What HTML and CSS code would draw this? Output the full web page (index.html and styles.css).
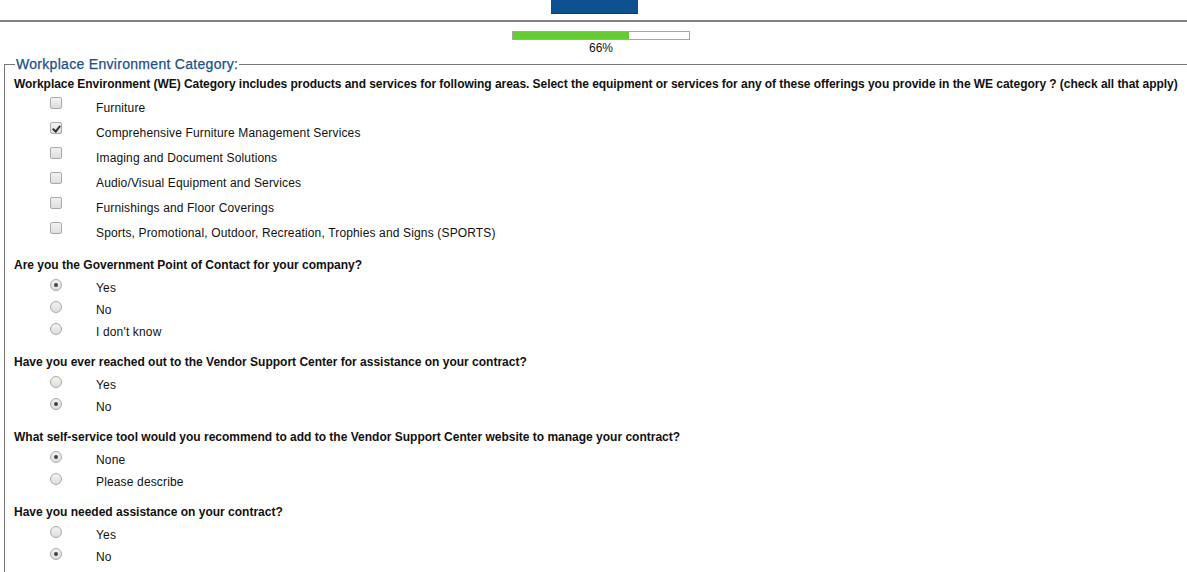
FILE: index.html
```html
<!DOCTYPE html>
<html lang="en">
  <head>
    <meta charset="utf-8">
    <title>Vendor Survey</title>
    <link rel="stylesheet" href="styles.css">
  </head>
  <body>
<div class="header">
  <div class="logo"></div>
</div>
<hr class="rule" />
<div class="progress">
  <div class="bar"><div class="fill" style="width: 66%;"></div></div>
  <div class="percent">66%</div>
</div>
<fieldset class="section">
  <legend>Workplace Environment Category:</legend>

  <div class="question long">Workplace Environment (WE) Category includes products and services for following areas. Select the equipment or services for any of these offerings you provide in the WE category ? (check all that apply)</div>
  <div class="options checks">
    <label class="option"><input type="checkbox"><span>Furniture</span></label>
    <label class="option"><input type="checkbox" checked><span>Comprehensive Furniture Management Services</span></label>
    <label class="option"><input type="checkbox"><span>Imaging and Document Solutions</span></label>
    <label class="option"><input type="checkbox"><span>Audio/Visual Equipment and Services</span></label>
    <label class="option"><input type="checkbox"><span>Furnishings and Floor Coverings</span></label>
    <label class="option"><input type="checkbox"><span>Sports, Promotional, Outdoor, Recreation, Trophies and Signs (SPORTS)</span></label>
  </div>

  <div class="question">Are you the Government Point of Contact for your company?</div>
  <div class="options radios">
    <label class="option"><input type="radio" name="poc" checked><span>Yes</span></label>
    <label class="option"><input type="radio" name="poc"><span>No</span></label>
    <label class="option"><input type="radio" name="poc"><span>I don't know</span></label>
  </div>

  <div class="question">Have you ever reached out to the Vendor Support Center for assistance on your contract?</div>
  <div class="options radios">
    <label class="option"><input type="radio" name="reached"><span>Yes</span></label>
    <label class="option"><input type="radio" name="reached" checked><span>No</span></label>
  </div>

  <div class="question">What self-service tool would you recommend to add to the Vendor Support Center website to manage your contract?</div>
  <div class="options radios">
    <label class="option"><input type="radio" name="tool" checked><span>None</span></label>
    <label class="option"><input type="radio" name="tool"><span>Please describe</span></label>
  </div>

  <div class="question">Have you needed assistance on your contract?</div>
  <div class="options radios">
    <label class="option"><input type="radio" name="assist"><span>Yes</span></label>
    <label class="option"><input type="radio" name="assist" checked><span>No</span></label>
  </div>
</fieldset>
  </body>
</html>
```

FILE: styles.css
```css
* {
  font-family: 'Liberation Sans', Arial, sans-serif;
  margin: 0px;
  padding: 0px;
  box-sizing: border-box;
}
body {
  background-color: white;
  color: #111;
  font-size: 12px;
}
.header {
  display: flex;
  justify-content: center;
  height: 14px;
}
.logo {
  width: 87px;
  height: 14px;
  margin-left: 2px;
  background-color: #0d5190;
  border-bottom: 1px solid #0a3f70;
}
.rule {
  border: none;
  border-top: 2px solid #808080;
  margin-top: 6px;
}
.progress {
  width: 178px;
  margin: 9px 0px 0px 512px;
  text-align: center;
}
.bar {
  height: 9px;
  border: 1px solid #a6a6a6;
  background-color: white;
}
.fill {
  height: 100%;
  background-color: #66cc33;
}
.percent {
  font-size: 12px;
  line-height: 14px;
  margin-top: 1px;
}
.section {
  margin: 1px 0px 0px 4px;
  border: none;
  border-top: 1px solid #777;
  border-left: 1px solid #777;
  padding: 4px 0px 10px 9px;
}
.section legend {
  color: #1a5189;
  font-size: 14px;
  font-weight: normal;
  letter-spacing: 0.3px;
  -webkit-text-stroke: 0.25px #1a5189;
  padding: 0px 1px 0px 1px;
  margin-left: 1px;
  line-height: 16px;
}
.question {
  font-weight: bold;
  font-size: 12px;
  line-height: 16px;
  margin-top: 11px;
  white-space: nowrap;
}
.question.long {
  letter-spacing: -0.045px;
}
.section legend + .question {
  margin-top: 0px;
}
.options {
  margin-top: 4px;
}
.options.checks {
  margin-top: 3px;
  padding-bottom: 1px;
}
.option {
  display: flex;
  align-items: center;
  font-size: 12px;
}
.checks .option {
  height: 25px;
}
.radios .option {
  height: 22px;
}
.option span {
  margin-left: 34px;
  letter-spacing: 0.15px;
}
.option input {
  appearance: none;
  -webkit-appearance: none;
  width: 12px;
  height: 12px;
  margin-left: 36px;
  border: 1px solid #a9a9a9;
  background: linear-gradient(#f2f2f2, #dedede);
  position: relative;
}
.checks .option input {
  border-radius: 2px;
  margin-top: -9px;
}
.radios .option input {
  border-radius: 50%;
  margin-top: -6px;
}
.checks .option input:checked::after {
  content: '';
  position: absolute;
  left: 3px;
  top: 1px;
  width: 3px;
  height: 6px;
  border-right: 2px solid #333;
  border-bottom: 2px solid #333;
  transform: rotate(40deg);
}
.radios .option input:checked::after {
  content: '';
  position: absolute;
  left: 3px;
  top: 3px;
  width: 4px;
  height: 4px;
  border-radius: 50%;
  background-color: #444;
}
```
